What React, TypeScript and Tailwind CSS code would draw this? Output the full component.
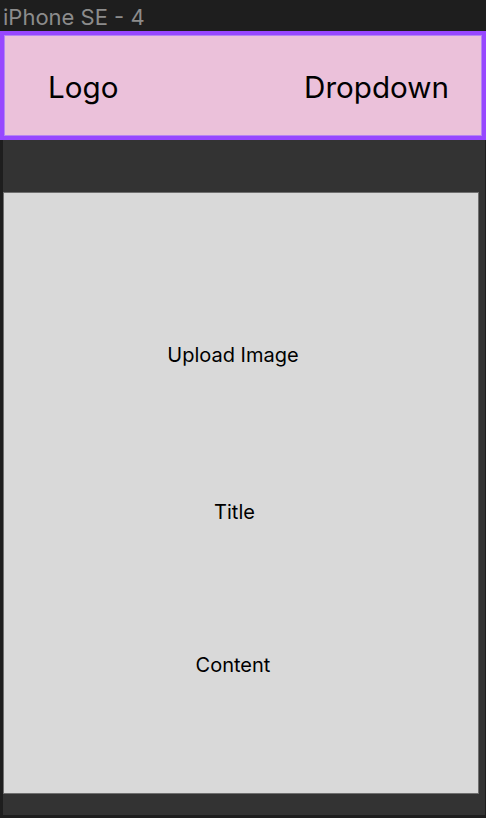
export default function App() {
  const font = { fontFamily: "Inter, 'Noto Sans', sans-serif" };
  return (
    <div className="w-[486px] h-[818px] bg-[#1e1e1e] overflow-hidden flex flex-col" style={font}>
      <div className="h-[31px] pl-[3px] flex items-end text-[22px] leading-[26px] text-[#8c8c8c] pb-[1px]">
        iPhone SE - 4
      </div>
      <div className="relative z-10 h-[109px] w-[486px] border-[4px] border-[#9747ff] bg-[#ebc1da] shadow-[inset_0_0_0_1px_#b585f2] flex items-center justify-between pl-[44px] pr-[33px] text-[29.6px] leading-[36px] text-black pt-[2px]">
        <span>Logo</span>
        <span>Dropdown</span>
      </div>
      <div className="ml-[3px] w-[482px] h-[675px] bg-[#333333] pt-[52px] flex flex-col">
        <div className="w-[476px] h-[602px] bg-[#d9d9d9] border border-[#6f6f6f] flex flex-col items-center pr-[16px] text-[20px] leading-[24px] text-black">
          <div className="mt-[150px]">Upload Image</div>
          <div className="mt-[133px] ml-[3px]">Title</div>
          <div className="mt-[129px]">Content</div>
        </div>
      </div>
    </div>
  );
}
